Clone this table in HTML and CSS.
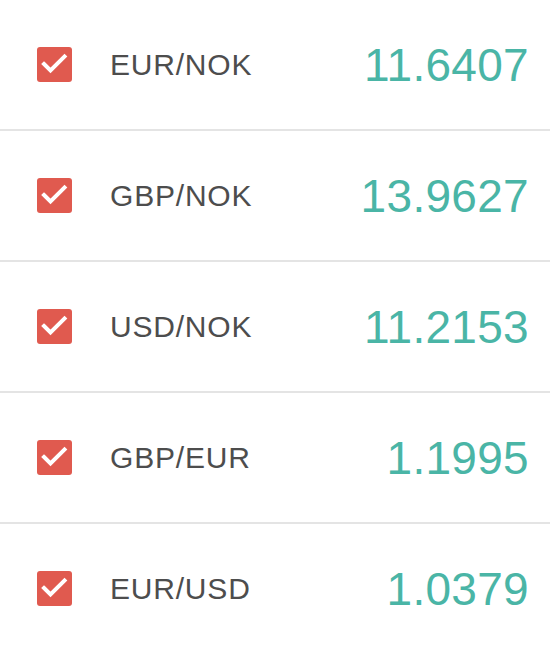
FILE: index.html
```html
<!DOCTYPE html>
<html>
<head>
<meta charset="utf-8">
<link rel="stylesheet" href="styles.css">
</head>
<body>
<ul class="list">
  <li class="row">
    <span class="box"><svg viewBox="0 0 35 35" width="35" height="35"><path d="M7 17 L13.5 23.5 L27.5 9.5" fill="none" stroke="#fff" stroke-width="4" stroke-linecap="square"/></svg></span>
    <span class="pair">EUR/NOK</span>
    <span class="rate">11.6407</span>
  </li>
  <li class="row">
    <span class="box"><svg viewBox="0 0 35 35" width="35" height="35"><path d="M7 17 L13.5 23.5 L27.5 9.5" fill="none" stroke="#fff" stroke-width="4" stroke-linecap="square"/></svg></span>
    <span class="pair">GBP/NOK</span>
    <span class="rate">13.9627</span>
  </li>
  <li class="row">
    <span class="box"><svg viewBox="0 0 35 35" width="35" height="35"><path d="M7 17 L13.5 23.5 L27.5 9.5" fill="none" stroke="#fff" stroke-width="4" stroke-linecap="square"/></svg></span>
    <span class="pair">USD/NOK</span>
    <span class="rate">11.2153</span>
  </li>
  <li class="row">
    <span class="box"><svg viewBox="0 0 35 35" width="35" height="35"><path d="M7 17 L13.5 23.5 L27.5 9.5" fill="none" stroke="#fff" stroke-width="4" stroke-linecap="square"/></svg></span>
    <span class="pair">GBP/EUR</span>
    <span class="rate">1.1995</span>
  </li>
  <li class="row">
    <span class="box"><svg viewBox="0 0 35 35" width="35" height="35"><path d="M7 17 L13.5 23.5 L27.5 9.5" fill="none" stroke="#fff" stroke-width="4" stroke-linecap="square"/></svg></span>
    <span class="pair">EUR/USD</span>
    <span class="rate">1.0379</span>
  </li>
</ul>
</body>
</html>
```
FILE: styles.css
```css
html, body {
  margin: 0;
  padding: 0;
  background: #fff;
}
body {
  font-family: "Liberation Sans", Arial, sans-serif;
}
.list {
  list-style: none;
  margin: 0;
  padding: 0;
}
.row {
  display: flex;
  align-items: center;
  height: 129px;
  padding: 0 21px 0 37px;
  border-bottom: 2px solid #e4e4e4;
}
.row:last-child {
  border-bottom: none;
}
.box {
  width: 35px;
  height: 35px;
  flex: none;
  border-radius: 3px;
  background: #e05a4f;
  display: flex;
}
.box svg {
  display: block;
}
.pair {
  margin-left: 38px;
  font-size: 30px;
  letter-spacing: 0.8px;
  color: #4d4d4d;
  flex: 1;
}
.rate {
  font-size: 46px;
  letter-spacing: 0.3px;
  color: #4ab5a6;
}
```
